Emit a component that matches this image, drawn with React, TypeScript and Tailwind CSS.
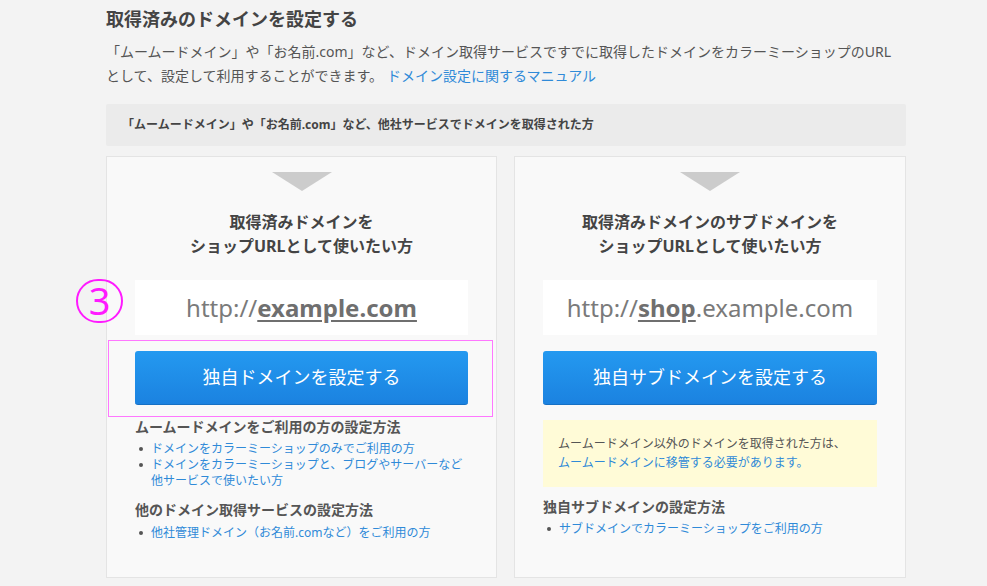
import React from 'react';

const font = { fontFamily: '"Noto Sans", "Noto Sans CJK JP", sans-serif' };

function Triangle() {
  return (
    <div className="flex justify-center">
      <div className="w-0 h-0 border-l-[30px] border-r-[30px] border-t-[19px] border-l-transparent border-r-transparent border-t-[#cccccc]" />
    </div>
  );
}

function Bullet({ children }: { children: React.ReactNode }) {
  return (
    <li className="flex text-[12px] leading-[16px]">
      <span className="w-[16px] h-[16px] shrink-0 flex items-center pl-[4px]">
        <span className="w-[4px] h-[4px] rounded-full bg-[#555]" />
      </span>
      <a className="text-[#2f8ad8]">{children}</a>
    </li>
  );
}

export default function App() {
  return (
    <div className="min-h-[586px] bg-[#f3f3f3] text-[#555] relative" style={font}>
      <div className="w-[800px] ml-[106px] pt-[5px]">
        <h2 className="text-[18px] leading-[28px] font-bold text-[#444]">取得済みのドメインを設定する</h2>
        <p className="mt-[7px] text-[14px] leading-[24px] text-[#555]">
          「ムームードメイン」や「お名前.com」など、ドメイン取得サービスですでに取得したドメインをカラーミーショップのURL
          <br />
          として、設定して利用することができます。
          <a className="text-[#2f8ad8] ml-[4px]">ドメイン設定に関するマニュアル</a>
        </p>

        <div className="mt-[16px] h-[42px] bg-[#ebebeb] rounded-[2px] flex items-center px-[16px] text-[12px] font-bold text-[#444]">
          「ムームードメイン」や「お名前.com」など、他社サービスでドメインを取得された方
        </div>

        <div className="mt-[10px] grid grid-cols-[391px_392px] gap-[17px]">
          {/* left */}
          <div className="h-[422px] bg-[#f9f9f9] border border-[#e4e4e4] pt-[15px] px-[28px]">
            <Triangle />
            <h3 className="mt-[19px] text-center text-[16px] leading-[24px] font-bold text-[#444]">
              取得済みドメインを
              <br />
              ショップURLとして使いたい方
            </h3>
            <div className="mt-[22px] h-[55px] bg-white flex items-center justify-center text-[24px] text-[#7a7a7a]">
              http://<span className="font-bold underline underline-offset-[3px] text-[#6f6f6f]">example.com</span>
            </div>
            <button className="mt-[16px] w-full h-[54px] rounded-[3px] bg-gradient-to-b from-[#2499f0] to-[#1b82e0] border-b border-[#1670c4] text-white text-[18px]">
              独自ドメインを設定する
            </button>
            <h4 className="mt-[12px] text-[14px] leading-[20px] font-bold text-[#555]">ムームードメインをご利用の方の設定方法</h4>
            <ul className="mt-[4px]">
              <Bullet>ドメインをカラーミーショップのみでご利用の方</Bullet>
              <Bullet>
                ドメインをカラーミーショップと、ブログやサーバーなど
                <br />
                他サービスで使いたい方
              </Bullet>
            </ul>
            <h4 className="mt-[11px] text-[14px] leading-[20px] font-bold text-[#555]">他のドメイン取得サービスの設定方法</h4>
            <ul className="mt-[5px]">
              <Bullet>他社管理ドメイン（お名前.comなど）をご利用の方</Bullet>
            </ul>
          </div>

          {/* right */}
          <div className="h-[422px] bg-[#f9f9f9] border border-[#e4e4e4] pt-[15px] px-[28px]">
            <Triangle />
            <h3 className="mt-[19px] text-center text-[16px] leading-[24px] font-bold text-[#444]">
              取得済みドメインのサブドメインを
              <br />
              ショップURLとして使いたい方
            </h3>
            <div className="mt-[22px] h-[55px] bg-white flex items-center justify-center text-[24px] text-[#7a7a7a]">
              http://<span className="font-bold underline underline-offset-[3px] text-[#6f6f6f]">shop</span>.example.com
            </div>
            <button className="mt-[16px] w-full h-[54px] rounded-[3px] bg-gradient-to-b from-[#2499f0] to-[#1b82e0] border-b border-[#1670c4] text-white text-[18px]">
              独自サブドメインを設定する
            </button>
            <div className="mt-[15px] h-[67px] bg-[#fffbd7] px-[15px] pt-[14px] text-[12px] leading-[19px] text-[#555]">
              ムームードメイン以外のドメインを取得された方は、
              <br />
              <a className="text-[#2f8ad8]">ムームードメインに移管する必要があります。</a>
            </div>
            <h4 className="mt-[10px] text-[14px] leading-[20px] font-bold text-[#555]">独自サブドメインの設定方法</h4>
            <ul className="mt-[4px]">
              <Bullet>サブドメインでカラーミーショップをご利用の方</Bullet>
            </ul>
          </div>
        </div>
      </div>

      {/* annotations */}
      <div className="absolute left-[76px] top-[279px] w-[47px] h-[44px] rounded-full border-2 border-[#ff1aff] flex items-center justify-center text-[38px] leading-none text-[#ff1aff]" style={{ fontFamily: '"Noto Sans", sans-serif' }}>
        <span className="-mt-[3px]">3</span>
      </div>
      <div className="absolute left-[108px] top-[340px] w-[385px] h-[77px] border border-[#ff77ff]" />
    </div>
  );
}
